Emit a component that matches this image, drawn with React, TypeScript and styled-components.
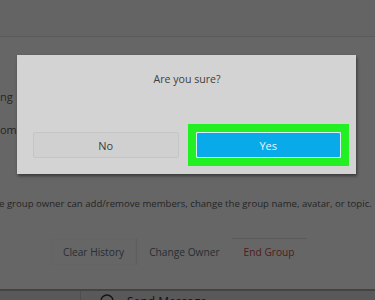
import React from 'react'
import styled, { createGlobalStyle } from 'styled-components';

const GlobalStyle = createGlobalStyle`
  html, body {
    margin: 0;
    padding: 0;
    background: #ffffff;
    font-family: "Open Sans", "Noto Sans", sans-serif;
  }
`;

function App() {
  return (
    <>
      <GlobalStyle />
      <Page>
        <Header />
        <Settings>
          <Line $top={52}>ng</Line>
          <Line $top={17}>om.</Line>
          <Note>e group owner can add/remove members, change the group name, avatar, or topic.</Note>
          <Actions>
            <ActionButton $boxed>Clear History</ActionButton>
            <ActionButton $divider>Change Owner</ActionButton>
            <ActionButton $danger $topline>End Group</ActionButton>
          </Actions>
        </Settings>
        <Footer>
          <FooterSide />
          <FooterItem>
            <svg width="14" height="14" viewBox="0 0 14 14" fill="none" stroke="#333" strokeWidth="1.4">
              <circle cx="7" cy="7" r="6" />
              <path d="M4 6.5c1.6 2 4.4 2 6 0" />
            </svg>
            <span>Send Message</span>
          </FooterItem>
        </Footer>

        <Overlay>
          <Dialog>
            <Title>Are you sure?</Title>
            <ButtonRow>
              <DialogButton>No</DialogButton>
              <DialogButton $primary>Yes</DialogButton>
            </ButtonRow>
          </Dialog>
        </Overlay>
      </Page>
    </>
  )
}

export default App;

const Page = styled.div`
  position: relative;
  width: 375px;
  height: 300px;
  overflow: hidden;
  background: #ffffff;
`;

const Header = styled.div`
  height: 36px;
  background: #fafafa;
  border-bottom: 1px solid #e4e4e4;
`;

const Settings = styled.div`
  display: flex;
  flex-direction: column;
  padding-bottom: 24px;
  background: #ffffff;
  font-size: 11px;
  color: #5e5e5e;
`;

const Line = styled.p<{ $top: number }>`
  margin: ${(p) => p.$top}px 0 0;
  line-height: 16px;
`;

const Note = styled.p`
  margin: 58px 0 0 -1px;
  line-height: 16px;
  font-size: 9.6px;
  white-space: nowrap;
`;

const Actions = styled.div`
  display: flex;
  margin-top: 26px;
  padding-left: 51px;
  height: 27px;
`;

const ActionButton = styled.div<{ $danger?: boolean; $divider?: boolean; $topline?: boolean; $boxed?: boolean }>`
  display: flex;
  align-items: center;
  padding: 0 12px;
  font-size: 10.2px;
  color: ${(p) => (p.$danger ? '#c84a46' : '#66737e')};
  border-left: ${(p) => (p.$divider ? '1px solid #ececec' : 'none')};
  border-top: 1px solid ${(p) => (p.$topline ? '#e2e2e2' : 'transparent')};
  box-shadow: ${(p) => (p.$boxed ? 'inset 0 0 0 1px #fbfbfb' : 'none')};
`;

const Footer = styled.div`
  display: flex;
  height: 40px;
  background: #dedede;
  box-shadow: 0 -2px 0 #a8a8a8;
  margin-top: 2px;
`;

const FooterSide = styled.div`
  width: 80px;
  border-right: 1px solid #c4c4c4;
`;

const FooterItem = styled.div`
  display: flex;
  align-items: center;
  gap: 13px;
  padding: 0 0 0 19px;
  height: 16px;
  margin-top: 2px;
  font-size: 12px;
  color: #333333;
`;

const Overlay = styled.div`
  position: absolute;
  inset: 0;
  background: rgba(0, 0, 0, 0.6);
  display: flex;
  justify-content: flex-start;
  align-items: flex-start;
  padding: 55px 0 0 17px;
`;

const Dialog = styled.div`
  width: 339px;
  height: 119px;
  box-sizing: border-box;
  background: #d3d3d3;
  box-shadow: 1px 2px 3px rgba(0, 0, 0, 0.45);
  display: flex;
  flex-direction: column;
  justify-content: space-between;
  padding: 16px 15px 16px 16px;
`;

const Title = styled.div`
  text-align: center;
  font-size: 10.6px;
  line-height: 16px;
  color: #404040;
`;

const ButtonRow = styled.div`
  display: flex;
  gap: 17px;
`;

const DialogButton = styled.div<{ $primary?: boolean }>`
  position: relative;
  flex: 1;
  height: 26px;
  box-sizing: border-box;
  display: flex;
  align-items: center;
  justify-content: center;
  font-size: 11px;
  border-radius: 2px;
  background: ${(p) => (p.$primary ? '#08aaea' : '#d0d0d0')};
  color: ${(p) => (p.$primary ? '#eaf7ff' : '#3c3c3c')};
  border: 1px solid ${(p) => (p.$primary ? '#d6f0fb' : '#c5c5c5')};

  &::before {
    content: '';
    display: ${(p) => (p.$primary ? 'block' : 'none')};
    position: absolute;
    inset: -9px -9px -9px -9px;
    border: 8px solid #22f022;
    pointer-events: none;
  }
`;
